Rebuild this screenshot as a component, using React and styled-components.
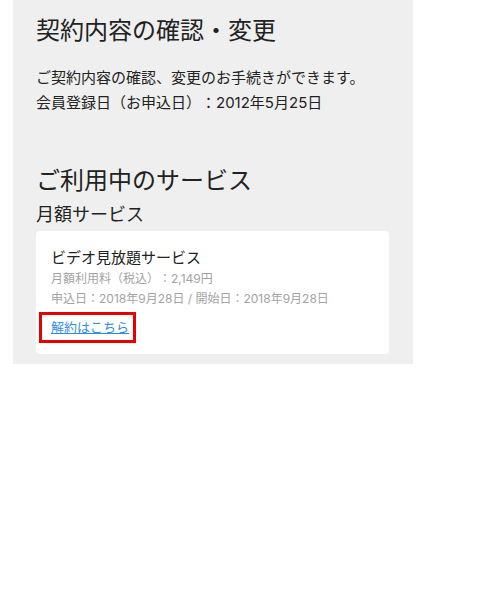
import React from "react";
import styled, { createGlobalStyle } from "styled-components";

const GlobalStyle = createGlobalStyle`
  body {
    margin: 0;
    background: #fff;
    font-family: Inter, "Noto Sans CJK JP", sans-serif;
    color: #222;
    text-spacing-trim: space-all;
  }
`;

const Panel = styled.div`
  margin-left: 13px;
  width: 400px;
  background: #efefef;
  padding: 14px 24px 10px 23px;
  box-sizing: border-box;
`;

const Title = styled.h1`
  margin: 0;
  font-size: 24px;
  font-weight: 400;
  line-height: 34px;
`;

const Lead = styled.p`
  margin: 17px 0 0;
  font-size: 15px;
  line-height: 25px;
`;

const SectionTitle = styled.h2`
  margin: 49px 0 0;
  font-size: 24px;
  font-weight: 400;
  line-height: 34px;
`;

const SubTitle = styled.h3`
  margin: 2px 0 0;
  font-size: 18px;
  font-weight: 400;
  line-height: 30px;
`;

const Card = styled.div`
  margin-top: 1px;
  background: #fff;
  border-radius: 4px;
  padding: 16px 15px 11px;
`;

const ServiceName = styled.div`
  font-size: 15px;
  line-height: 22px;
`;

const Meta = styled.div`
  font-size: 12px;
  line-height: 20px;
  color: #a3a3a3;
`;

const Link = styled.a`
  display: inline-block;
  margin: 3px 0 0 -12px;
  padding: 3px 4px 3px 9px;
  border: 3px solid #e60000;
  font-size: 13px;
  line-height: 19px;
  color: #2f8de4;
  text-decoration: underline;
`;

export default function App() {
  return (
    <>
      <GlobalStyle />
      <Panel>
        <Title>契約内容の確認・変更</Title>
        <Lead>
          ご契約内容の確認、変更のお手続きができます。
          <br />
          会員登録日（お申込日）：2012年5月25日
        </Lead>
        <SectionTitle>ご利用中のサービス</SectionTitle>
        <SubTitle>月額サービス</SubTitle>
        <Card>
          <ServiceName>ビデオ見放題サービス</ServiceName>
          <Meta>月額利用料（税込）：2,149円</Meta>
          <Meta>申込日：2018年9月28日 / 開始日：2018年9月28日</Meta>
          <Link href="#">解約はこちら</Link>
        </Card>
      </Panel>
    </>
  );
}
